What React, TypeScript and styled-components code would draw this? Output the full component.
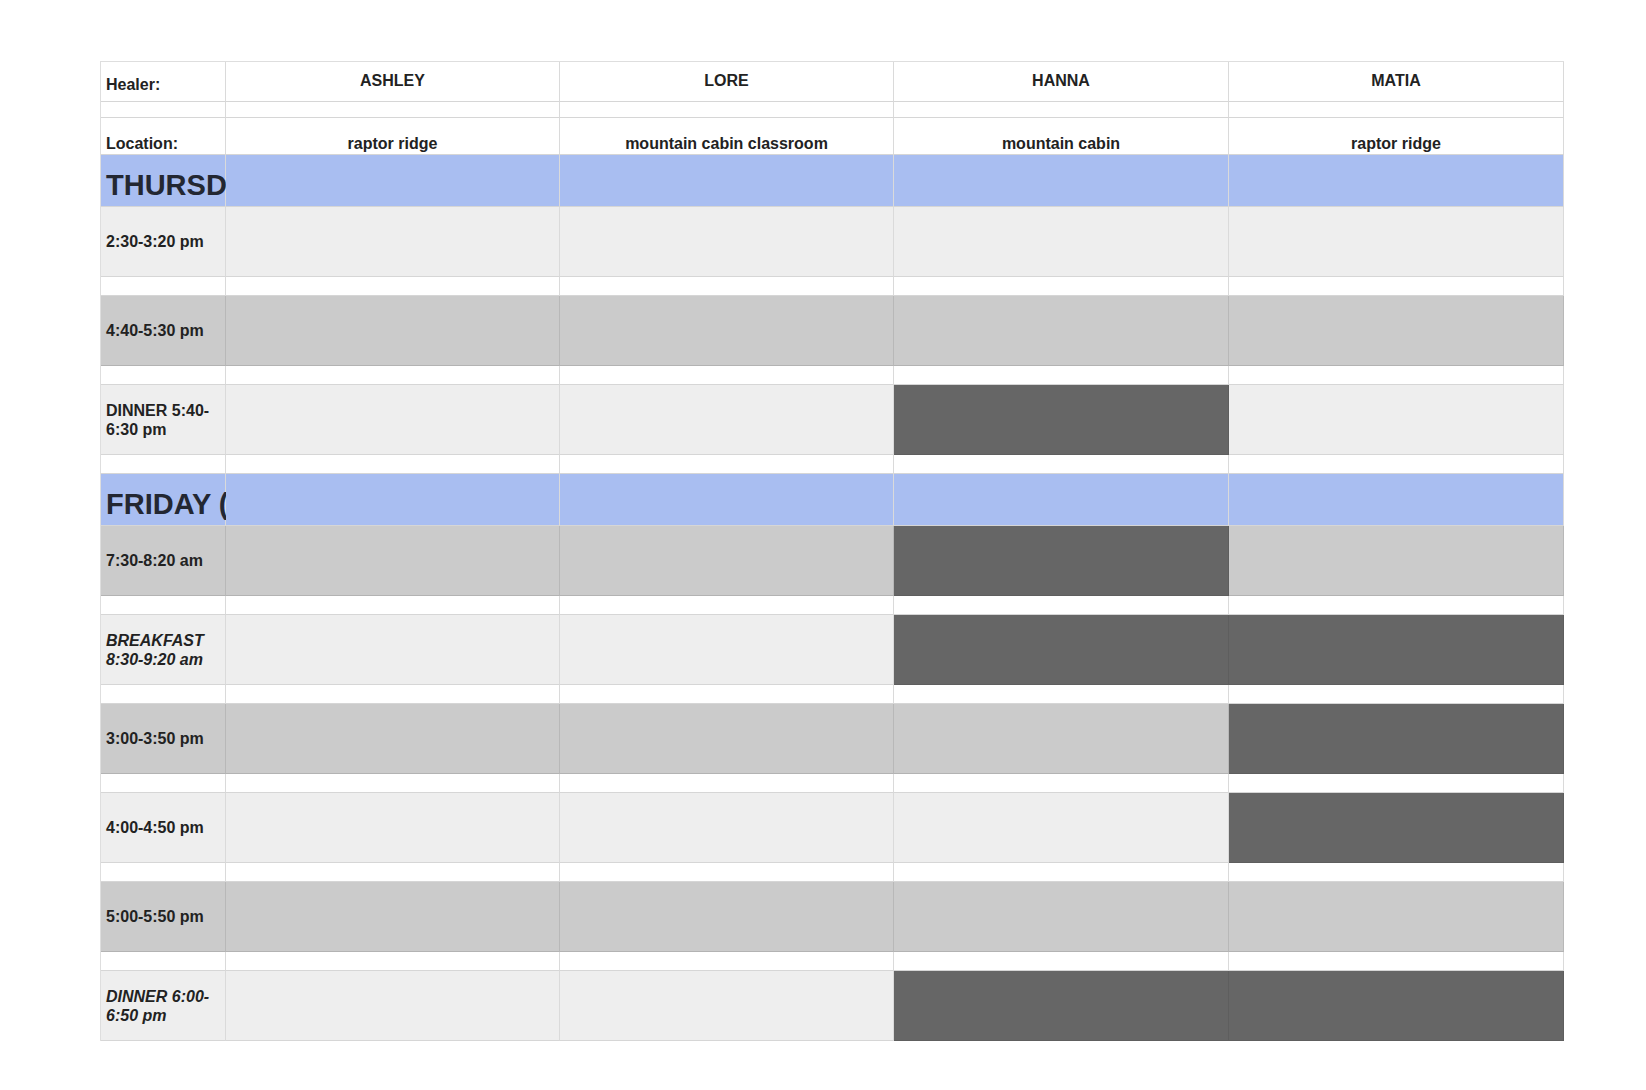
import React from 'react';
import styled, { createGlobalStyle } from 'styled-components';

type Shade = 'light' | 'mid' | 'dark' | 'white' | 'band';

const shades: Record<Shade, string> = {
  light: '#eeeeee',
  mid: '#cbcbcb',
  dark: '#666666',
  white: '#ffffff',
  band: '#a9bef1',
};

const healers = [
  { name: 'ASHLEY', location: 'raptor ridge' },
  { name: 'LORE', location: 'mountain cabin classroom' },
  { name: 'HANNA', location: 'mountain cabin' },
  { name: 'MATIA', location: 'raptor ridge' },
];

interface Session {
  label: string;
  shade: 'light' | 'mid';
  italic?: boolean;
  blocked: number[];
}

interface Day {
  title: string;
  sessions: Session[];
}

const days: Day[] = [
  {
    title: 'THURSDAY\u00a0\u00a0(3 sessions)',
    sessions: [
      { label: '2:30-3:20 pm', shade: 'light', blocked: [] },
      { label: '4:40-5:30 pm', shade: 'mid', blocked: [] },
      { label: 'DINNER 5:40-6:30 pm', shade: 'light', blocked: [2] },
    ],
  },
  {
    title: 'FRIDAY (6 sessions)',
    sessions: [
      { label: '7:30-8:20 am', shade: 'mid', blocked: [2] },
      { label: 'BREAKFAST 8:30-9:20 am', shade: 'light', italic: true, blocked: [2, 3] },
      { label: '3:00-3:50 pm', shade: 'mid', blocked: [3] },
      { label: '4:00-4:50 pm', shade: 'light', blocked: [3] },
      { label: '5:00-5:50 pm', shade: 'mid', blocked: [] },
      { label: 'DINNER 6:00-6:50 pm', shade: 'light', italic: true, blocked: [2, 3] },
    ],
  },
];

const GlobalStyle = createGlobalStyle`
  body {
    margin: 0;
    background: #fff;
    font-family: "Liberation Sans", Arial, sans-serif;
    color: #222;
  }
`;

const Page = styled.div`
  padding: 61px 0 0 100px;
`;

const Sheet = styled.div`
  display: grid;
  grid-template-columns: 125px 334px 334px 335px 335px;
  width: max-content;
  border-top: 1px solid #dedede;
  border-left: 1px solid #dedede;
`;

const Cell = styled.div<{ $shade: Shade; $h: number; $align?: 'start' | 'center' | 'end'; $center?: boolean }>`
  height: ${({ $h }) => $h}px;
  box-sizing: border-box;
  background: ${({ $shade }) => shades[$shade]};
  border-right: 1px solid ${({ $shade }) => ($shade === 'dark' ? '#5e5e5e' : $shade === 'mid' ? '#b8b8b8' : '#dadada')};
  border-bottom: 1px solid ${({ $shade }) => ($shade === 'dark' ? '#5e5e5e' : $shade === 'mid' ? '#b3b3b3' : '#d6d6d6')};
  display: flex;
  align-items: ${({ $align }) => ($align === 'start' ? 'flex-start' : $align === 'end' ? 'flex-end' : 'center')};
  justify-content: ${({ $center }) => ($center ? 'center' : 'flex-start')};
  padding: 0 5px;
  font-size: 16px;
  font-weight: bold;
  line-height: 19px;
`;

const NameText = styled.span`
  padding-top: 9px;
`;

const BottomText = styled.span<{ $pad: number }>`
  padding-bottom: ${({ $pad }) => $pad}px;
`;

const BandTitle = styled.span`
  font-size: 29px;
  line-height: 32px;
  padding-bottom: 5px;
  white-space: nowrap;
  color: #232732;
`;

const TimeLabel = styled.span<{ $italic?: boolean }>`
  font-style: ${({ $italic }) => ($italic ? 'italic' : 'normal')};
  padding-right: 6px;
`;

const SESSION_H = 70;
const GAP_H = 19;

const App: React.FC = () => (
  <Page>
    <GlobalStyle />
    <Sheet>
      <Cell $shade="white" $h={40} $align="end">
        <BottomText $pad={7}>Healer:</BottomText>
      </Cell>
      {healers.map((h) => (
        <Cell key={h.name} $shade="white" $h={40} $align="start" $center>
          <NameText>{h.name}</NameText>
        </Cell>
      ))}
      {[0, 1, 2, 3, 4].map((i) => (
        <Cell key={`sp${i}`} $shade="white" $h={16} />
      ))}
      <Cell $shade="white" $h={37} $align="end">
        <BottomText $pad={1}>Location:</BottomText>
      </Cell>
      {healers.map((h, i) => (
        <Cell key={`loc${i}`} $shade="white" $h={37} $align="end" $center>
          <BottomText $pad={1}>{h.location}</BottomText>
        </Cell>
      ))}

      {days.map((day, di) => (
        <React.Fragment key={day.title}>
          {di > 0 &&
            [0, 1, 2, 3, 4].map((i) => <Cell key={`dg${di}${i}`} $shade="white" $h={GAP_H} />)}
          <Cell $shade="band" $h={52} $align="end">
            <BandTitle>{day.title}</BandTitle>
          </Cell>
          {[0, 1, 2, 3].map((i) => (
            <Cell key={`band${di}${i}`} $shade="band" $h={52} />
          ))}
          {day.sessions.map((s, si) => (
            <React.Fragment key={s.label}>
              {si > 0 &&
                [0, 1, 2, 3, 4].map((i) => (
                  <Cell key={`g${si}${i}`} $shade="white" $h={GAP_H} />
                ))}
              <Cell $shade={s.shade} $h={SESSION_H}>
                <TimeLabel $italic={s.italic}>{s.label}</TimeLabel>
              </Cell>
              {healers.map((_, hi) => (
                <Cell
                  key={`c${si}${hi}`}
                  $shade={s.blocked.includes(hi) ? 'dark' : s.shade}
                  $h={SESSION_H}
                />
              ))}
            </React.Fragment>
          ))}
        </React.Fragment>
      ))}
    </Sheet>
  </Page>
);

export default App;
